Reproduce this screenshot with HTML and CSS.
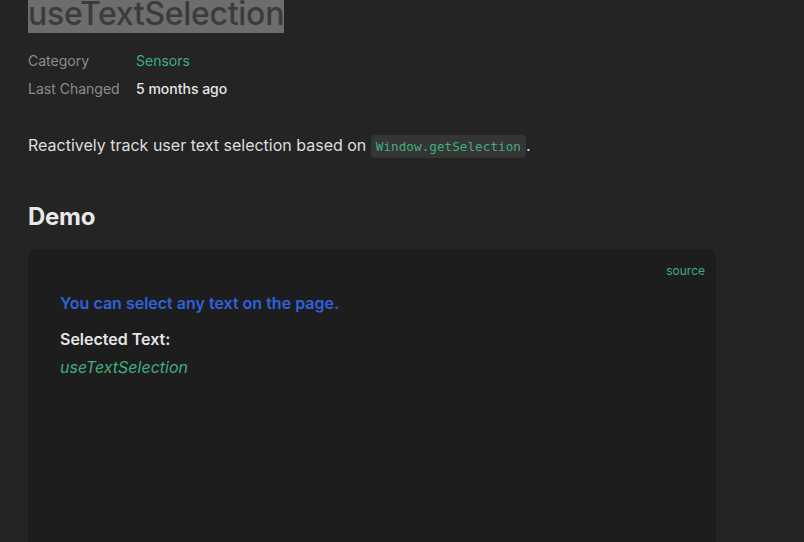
FILE: index.html
```html
<!DOCTYPE html>
<html>
<head>
<meta charset="utf-8">
<link rel="stylesheet" href="styles.css">
</head>
<body>
<main class="doc">
  <h1 class="title"><span class="sel">useTextSelection</span></h1>
  <div class="meta">
    <div class="meta-label">Category</div>
    <div class="meta-value green">Sensors</div>
    <div class="meta-label">Last Changed</div>
    <div class="meta-value">5 months ago</div>
  </div>
  <p class="lead">Reactively track user text selection based on <code class="chip">Window.getSelection</code>.</p>
  <h2 class="h2">Demo</h2>
  <section class="demo">
    <div class="source-row"><a class="source">source</a></div>
    <p class="blue">You can select any text on the page.</p>
    <p class="label">Selected Text:</p>
    <p class="selected">useTextSelection</p>
  </section>
</main>
</body>
</html>
```
FILE: styles.css
```css
html, body {
  margin: 0;
  padding: 0;
  background: #242424;
  height: 100%;
  overflow: hidden;
}
body {
  font-family: Inter, "Noto Sans", sans-serif;
  color: #dcdcdc;
}
.doc {
  padding-left: 28px;
  width: 688px;
}
.title {
  margin: -6px 0 0;
  font-size: 32px;
  line-height: 40px;
  font-weight: 500;
  letter-spacing: -0.3px;
}
.sel {
  background: #6d6d6d;
  color: #3b3b3b;
}
.meta {
  margin-top: 13px;
  display: grid;
  grid-template-columns: 108px auto;
  font-size: 14px;
  line-height: 28px;
}
.meta-label { color: #8c8c8c; }
.meta-value { color: #e6e6e6; font-weight: 500; }
.meta-value.green { color: #3eaf7c; font-weight: 400; }
.lead {
  margin: 28px 0 0;
  font-size: 16px;
  line-height: 28px;
  color: #dedede;
}
.chip {
  font-family: "DejaVu Sans Mono", "Liberation Mono", monospace;
  font-size: 12.7px;
  color: #3eaf7c;
  background: #353535;
  border-radius: 4px;
  padding: 4px 5px;
}
.h2 {
  margin: 40px 0 0;
  font-size: 24px;
  line-height: 32px;
  font-weight: 700;
  color: #e8e8e8;
  letter-spacing: -0.3px;
}
.demo {
  margin-top: 16px;
  background: #1d1d1d;
  border-radius: 8px;
  padding: 14px 11px 200px 32px;
}
.source-row {
  display: flex;
  justify-content: flex-end;
  line-height: 16px;
}
.source {
  font-size: 12px;
  color: #3eaf7c;
}
.blue {
  margin: 12px 0 0;
  font-size: 16px;
  line-height: 24px;
  font-weight: 600;
  color: #2f62dc;
}
.label {
  margin: 12px 0 0;
  font-size: 16px;
  line-height: 24px;
  font-weight: 600;
  color: #e6e6e6;
}
.selected {
  margin: 4px 0 0;
  font-size: 16px;
  line-height: 24px;
  font-style: italic;
  color: #3eaf7c;
}
```
